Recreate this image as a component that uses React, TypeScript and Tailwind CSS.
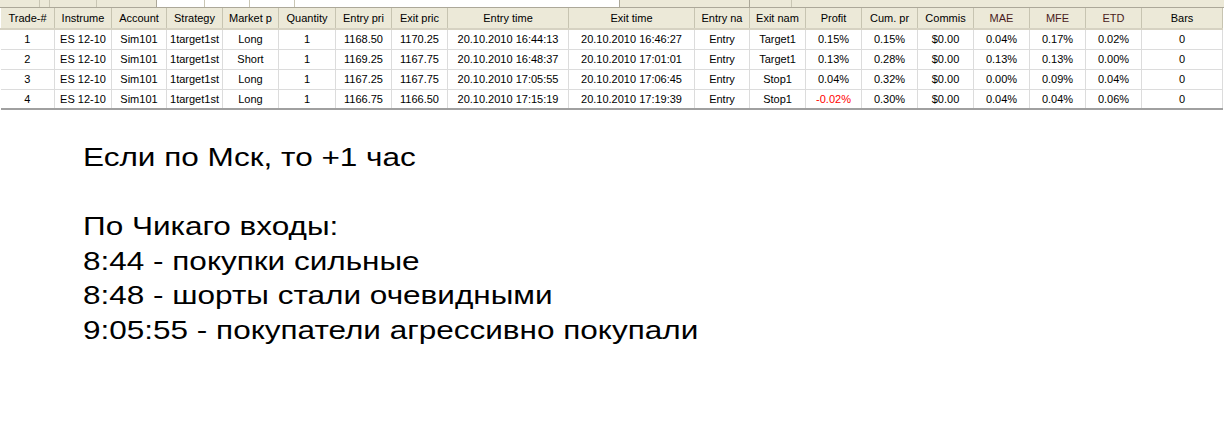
const cols = [
  { name: "Trade-#", w: 54 },
  { name: "Instrume", w: 57 },
  { name: "Account", w: 55 },
  { name: "Strategy", w: 56 },
  { name: "Market p", w: 56 },
  { name: "Quantity", w: 57 },
  { name: "Entry pri", w: 56 },
  { name: "Exit pric", w: 56 },
  { name: "Entry time", w: 121 },
  { name: "Exit time", w: 126 },
  { name: "Entry na", w: 55 },
  { name: "Exit nam", w: 56 },
  { name: "Profit", w: 56 },
  { name: "Cum. pr", w: 56 },
  { name: "Commis", w: 56 },
  { name: "MAE", w: 56, mark: true },
  { name: "MFE", w: 56, mark: true },
  { name: "ETD", w: 56, mark: true },
  { name: "Bars", w: 81 },
];

const rows = [
  ["1", "ES 12-10", "Sim101", "1target1st", "Long", "1", "1168.50", "1170.25", "20.10.2010 16:44:13", "20.10.2010 16:46:27", "Entry", "Target1", "0.15%", "0.15%", "$0.00", "0.04%", "0.17%", "0.02%", "0"],
  ["2", "ES 12-10", "Sim101", "1target1st", "Short", "1", "1169.25", "1167.75", "20.10.2010 16:48:37", "20.10.2010 17:01:01", "Entry", "Target1", "0.13%", "0.28%", "$0.00", "0.13%", "0.13%", "0.00%", "0"],
  ["3", "ES 12-10", "Sim101", "1target1st", "Long", "1", "1167.25", "1167.75", "20.10.2010 17:05:55", "20.10.2010 17:06:45", "Entry", "Stop1", "0.04%", "0.32%", "$0.00", "0.00%", "0.09%", "0.04%", "0"],
  ["4", "ES 12-10", "Sim101", "1target1st", "Long", "1", "1166.75", "1166.50", "20.10.2010 17:15:19", "20.10.2010 17:19:39", "Entry", "Stop1", "-0.02%", "0.30%", "$0.00", "0.04%", "0.04%", "0.06%", "0"],
];

const notes = [
  "Если по Мск, то +1 час",
  "",
  "По Чикаго входы:",
  "8:44 - покупки сильные",
  "8:48 - шорты стали очевидными",
  "9:05:55 - покупатели агрессивно покупали",
];

function TopStrip() {
  return (
    <div className="flex h-[8px] bg-[#ece9d8] border-b border-[#aca899]">
      <div className="w-[40px] border-r border-[#c9c6b4]" />
      <div className="w-[10px] border-r border-[#c9c6b4]" />
      <div className="w-[47px] border-r border-[#c9c6b4]" />
      <div className="w-[60px] border-r border-[#aca899]" />
      <div className="w-[463px] bg-white border-r border-[#aca899] flex">
        <div className="w-[48px] border-r border-[#c9c6b4]" />
        <div className="w-[45px] border-r border-[#c9c6b4]" />
        <div className="w-[45px] border-r border-[#c9c6b4]" />
      </div>
      <div className="w-[130px] border-r border-[#aca899]" />
      <div className="w-[42px] border-r border-[#c9c6b4]" />
      <div className="flex-1" />
    </div>
  );
}

function TradesGrid() {
  return (
    <table
      className="table-fixed border-collapse text-[11px] text-black"
      style={{ width: 1222 }}
    >
      <colgroup>
        {cols.map((c) => (
          <col key={c.name} style={{ width: c.w }} />
        ))}
      </colgroup>
      <thead>
        <tr className="h-[21px] bg-[#ece9d8]">
          {cols.map((c) => (
            <th
              key={c.name}
              className={`font-normal p-0 whitespace-nowrap overflow-hidden border-r border-r-[#c7c4b1] border-l border-l-white border-b-[2px] border-b-[#d6d2c2] ${
                c.mark ? "text-[#4a1c1c]" : "text-black"
              }`}
            >
              {c.name}
            </th>
          ))}
        </tr>
      </thead>
      <tbody>
        {rows.map((r, i) => (
          <tr
            key={i}
            className={`h-[20px] bg-white ${
              i === rows.length - 1 ? "border-b-[2px] border-b-[#a0a0a0]" : "border-b border-b-[#dcdcdc]"
            }`}
          >
            {r.map((v, j) => (
              <td
                key={j}
                className={`p-0 text-center whitespace-nowrap overflow-hidden border-r border-r-[#dcdcdc] ${
                  v.startsWith("-") ? "text-[#ff0000]" : ""
                }`}
              >
                {v}
              </td>
            ))}
          </tr>
        ))}
      </tbody>
    </table>
  );
}

export default function App() {
  return (
    <div
      className="w-[1224px] h-[439px] bg-white overflow-hidden"
      style={{ fontFamily: '"Liberation Sans", Arial, sans-serif' }}
    >
      <TopStrip />
      <TradesGrid />

      {/* notes under the grid, glyphs in the shot are stretched wide */}
      <div className="ml-[83px] pt-[30px] text-[25px] leading-[34.5px] text-black origin-left scale-x-[1.26]">
        {notes.map((line, i) => (
          <div key={i} className="h-[34.5px] whitespace-nowrap">
            {line}
          </div>
        ))}
      </div>
    </div>
  );
}
